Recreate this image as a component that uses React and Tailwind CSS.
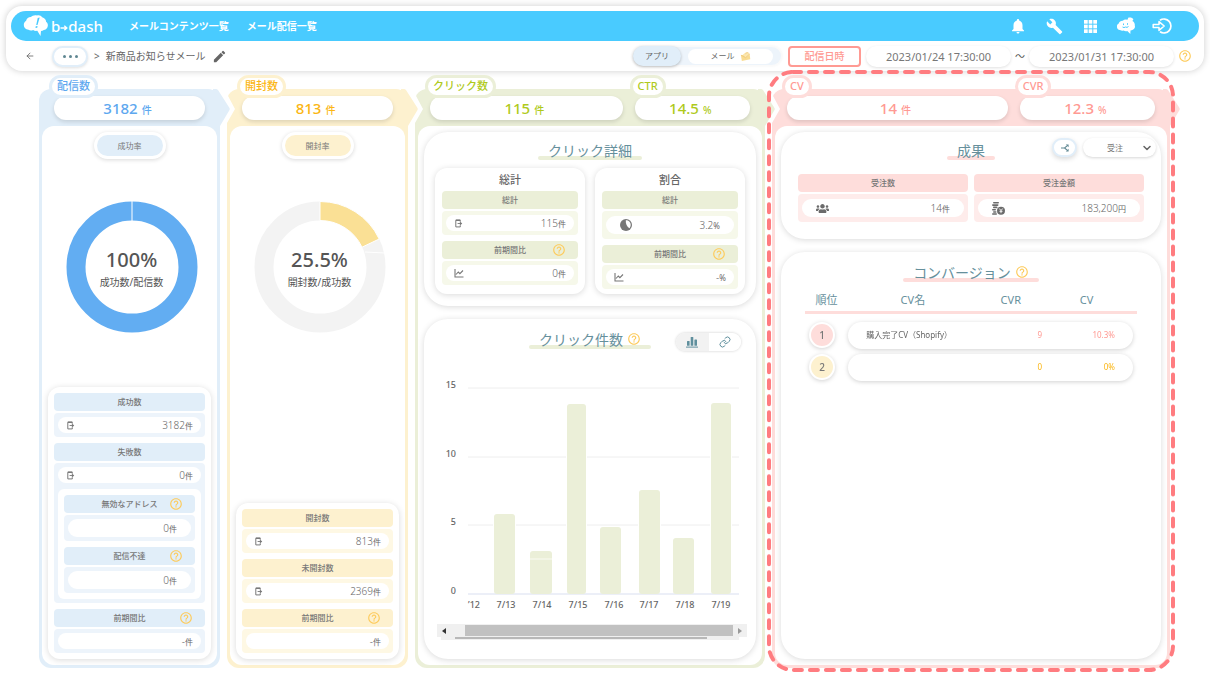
import React from "react";
import { MdHelpOutline, MdNotifications, MdBuild, MdEdit } from "react-icons/md";
import { FaUsers } from "react-icons/fa";
import { ArrowLeft, ChevronDown, Link as LinkIcon } from "lucide-react";

const THEMES = {
  blue: {
    solid: "bg-[#e1eef9]",
    pale: "bg-[#edf4fb]",
    border: "border-[#e1eef9]",
    text: "text-[#5ea8ef]",
    fill: "fill-[#e1eef9]",
  },
  yellow: {
    solid: "bg-[#fdf1cf]",
    pale: "bg-[#fef8e4]",
    border: "border-[#fdf1cf]",
    text: "text-[#fbb614]",
    fill: "fill-[#fdf1cf]",
  },
  green: {
    solid: "bg-[#ebefd8]",
    pale: "bg-[#f6f8ea]",
    border: "border-[#ebefd8]",
    text: "text-[#afca1c]",
    fill: "fill-[#ebefd8]",
  },
  pink: {
    solid: "bg-[#fedddb]",
    pale: "bg-[#feeceb]",
    border: "border-[#fedddb]",
    text: "text-[#ff9a93]",
    fill: "fill-[#fedddb]",
  },
};

function LogoMark() {
  return (
    <svg viewBox="0 0 26 24" className="h-6 w-[26px]" aria-hidden="true">
      <path
        fill="#fff"
        d="M5.5 15.8C2.5 15.5.8 13.4.8 11c0-2.200 1-3.400 2.200-4C3.600 4.400 5.800 3 8 3.100 9.300 1.400 12 .7 14 1.500c1.800-.7 4.200 0 5.200 1.700 2.300.5 3.900 2.500 3.900 4.600 1.600 1 2.300 3.300 1.400 5.400-.7 1.700-2.200 2.500-3.700 2.700-.8.7-1.800 1.100-2.800 1.200L17.500 22l-3.200-5.200c-1.600.4-3.100 0-4.200-.9-1.500.8-3.300.7-4.600-.1z"
      />
      <path fill="#49cbff" d="M14.700 4l2-.6-2.200 7.600-1.300.1zM12.700 12.300l1.800-.2-.2 1.600-1.800.2z" />
    </svg>
  );
}

function GridIcon() {
  return (
    <svg viewBox="0 0 14 14" className="size-[13px]" fill="#fff" aria-hidden="true">
      {[0, 5, 10].map((y) => [0, 5, 10].map((x) => <rect key={`${x}-${y}`} x={x} y={y} width="4" height="4" />))}
    </svg>
  );
}

function MascotIcon() {
  return (
    <svg viewBox="0 0 20 18" className="h-[18px] w-5" aria-hidden="true">
      <path
        fill="#fff"
        d="M4 13C2 13 .9 11.500 1 10c-.3-1.600.6-2.900 1.800-3.400C3.300 4.600 5 3.600 6.800 3.800 8 2.500 10 2.300 11.200 3L12.500.6c2.300-.4 4 .3 4.900 1.700l-1 1.800c1.800 1 2.700 2.700 2.400 4.400.6 1.800-.2 3.600-2 4.200-.7.6-1.500.8-2.300.8L14.300 17l-3-3c-1.300.4-2.700.2-3.700-.5-1.100.4-2.600.3-3.600-.5z"
      />
      <path fill="none" stroke="#49cbff" strokeWidth="1" d="M7.500 6.500v1.600M11.500 6.200v1.600M6.500 10q1.500 1.200 3 0q1.500 1 3-.5" />
    </svg>
  );
}

function ExitIcon() {
  return (
    <svg viewBox="0 0 20 18" className="h-[18px] w-5" fill="none" stroke="#fff" strokeWidth="1.7" aria-hidden="true">
      <path d="M8 3.200A7 7 0 1 1 8 14.800" />
      <path strokeWidth="1.500" strokeLinejoin="round" d="M1.200 7.400H7V4.600L12.200 9 7 13.400V10.600H1.200z" />
    </svg>
  );
}

function PhoneOutIcon() {
  return (
    <svg viewBox="0 0 10 10" className="size-[9px]" fill="none" stroke="#777" aria-hidden="true">
      <path strokeWidth="1.100" d="M7 3V1.500H2v7.300h5V7" />
      <path strokeWidth="1.600" d="M2 1.300h5" />
      <path strokeWidth="1" d="M4 5h3" />
      <path fill="#777" stroke="none" d="M6.500 2.800l2.700 2.200-2.700 2.200z" />
    </svg>
  );
}

function TrendIcon() {
  return (
    <svg viewBox="0 0 10 10" className="size-[10px]" fill="none" stroke="#777" strokeWidth="1.100" aria-hidden="true">
      <path d="M1 1v8h8.500M2 6.500L4.300 4l1.600 1.600L9 2.500" />
    </svg>
  );
}

function RatioIcon() {
  return (
    <svg viewBox="0 0 12 12" className="size-3" aria-hidden="true">
      <circle cx="6" cy="6" r="6" fill="#777" />
      <path fill="#fff" d="M5.800 1.300C8.500 1.200 10.700 3.200 10.700 6c0 1.300-.6 2.500-1.400 3.300Q5.500 6.500 5.800 1.300z" />
    </svg>
  );
}

function CoinsIcon() {
  return (
    <svg viewBox="0 0 13 13" className="size-[13px]" aria-hidden="true">
      <g fill="#6b6b6b">
        <rect x="1" y="0" width="6" height="1.600" rx=".8" />
        <rect x="0" y="2.300" width="6.500" height="1.600" rx=".8" />
        <rect x="1" y="4.600" width="4.500" height="1.600" rx=".8" />
        <rect x="0" y="6.900" width="4" height="1.600" rx=".8" />
        <rect x="1" y="9.200" width="3.500" height="1.600" rx=".8" />
        <rect x="0" y="11.200" width="5" height="1.500" rx=".7" />
        <circle cx="9" cy="8.700" r="4" />
      </g>
      <path stroke="#fff" strokeWidth=".9" fill="none" d="M7.300 6.500L9 8.600l1.700-2.100M9 8.600v2.600M7.500 9.300h3" />
    </svg>
  );
}

function BranchIcon() {
  return (
    <svg viewBox="0 0 10 10" className="size-2" fill="none" stroke="#5f8792" strokeWidth="1.400" aria-hidden="true">
      <path d="M0 5h4.500L8 2M4.500 5L8 8" />
      <path fill="#5f8792" stroke="none" d="M6 .5H9.500V4zM6 9.500h3.500V6z" />
    </svg>
  );
}

function BarsIcon() {
  return (
    <svg viewBox="0 0 12 12" className="size-3" fill="#5f8f9d" aria-hidden="true">
      <rect x="1" y="5" width="2.600" height="4.800" rx=".6" />
      <rect x="4.700" y="1" width="2.600" height="8.800" rx=".6" />
      <rect x="8.400" y="3.500" width="2.600" height="6.300" rx=".6" />
      <rect x="0" y="10.600" width="12" height="1" />
    </svg>
  );
}

function MailArtIcon() {
  return (
    <svg viewBox="0 0 12 12" className="size-[11px]" aria-hidden="true">
      <path fill="#f9dc92" d="M1 4.500l9.500-1.200.7 5.700L2 10.800z" />
      <path fill="#fbe7b0" d="M3 4l3-2.500 4 .5.200 2.500L6.300 7z" />
      <path fill="none" stroke="#efc577" strokeWidth=".8" d="M1 4.500l5 2.800 4.500-4M6 3.500q1-3 3-1.500" />
    </svg>
  );
}

function Help({ className = "" }) {
  return (
    <button type="button" aria-label="ヘルプ" className={`text-[#fdcb5c] ${className}`}>
      <MdHelpOutline className="size-[14px]" />
    </button>
  );
}

function HeaderArrow({ theme }) {
  return (
    <svg viewBox="0 0 22 40" className="absolute top-0 -right-[15px] z-10 h-10 w-[22px]" aria-hidden="true">
      <path fill="#fff" d="M4 0H17L14 5l8 15-8 14v6H7z" />
      <path className={THEMES[theme].fill} d="M0 0h3q1 0 2 1l11.500 18q.5 1 0 2L7 37v3H4L0 37z" />
    </svg>
  );
}

function Kpi({ theme, label, value, unit, className = "" }) {
  const t = THEMES[theme];
  return (
    <div className={`relative h-6 ${className}`}>
      <p
        className={`flex h-full items-baseline justify-center gap-1 rounded-full bg-white pr-1 text-[15px] leading-6 font-medium shadow-[0_2px_4px_rgba(0,0,0,0.13)] ${t.text}`}
      >
        {value}
        <span className="text-[10px]">{unit}</span>
      </p>
      <h2
        className={`absolute -top-[21px] -left-[5px] flex h-[23px] items-center rounded-full border-3 bg-white px-[5px] text-[11px] font-medium whitespace-nowrap ${t.border} ${t.text}`}
      >
        {label}
      </h2>
    </div>
  );
}

function Stage({ theme, kpis, arrow = true, children }) {
  const t = THEMES[theme];
  return (
    <section className={`relative flex min-w-0 flex-col rounded-xl px-[3px] pb-[3px] ${t.solid}`}>
      <div className="flex gap-3 px-3 pt-[7px] pb-[6px]">{kpis}</div>
      {arrow && <HeaderArrow theme={theme} />}
      <div className="flex flex-1 flex-col rounded-xl bg-white p-[6px]">{children}</div>
    </section>
  );
}

function Metric({ theme, label, help, icon, value, unit, tall, wide, inset, children }) {
  const t = THEMES[theme];
  return (
    <div className="flex flex-col gap-[2px]">
      <div className={`relative flex h-[18px] items-center justify-center rounded text-[8px] font-medium text-[#777] ${t.solid}`}>
        {label}
        {help && <Help className="absolute right-3" />}
      </div>
      <div className={`flex flex-col gap-[6px] rounded p-1 ${t.pale}`}>
        <div
          className={`flex items-center justify-between rounded-full bg-white ${tall ? "h-[18px]" : "h-4"} ${
            inset ? "px-[14px]" : "px-2"
          } ${wide ? "my-px" : ""}`}
        >
          <span className="flex">{icon}</span>
          <span className="text-[10px] leading-4 font-light text-[#666]">
            {value}
            <span className="text-[8px] font-normal">{unit}</span>
          </span>
        </div>
        {children}
      </div>
    </div>
  );
}

const cardShadow = "bg-white shadow-[0_1px_6px_rgba(0,0,0,0.15)]";

function MetricCard({ children }) {
  return <div className={`mt-auto flex flex-col gap-[6px] rounded-xl p-[6px] ${cardShadow}`}>{children}</div>;
}

function RatePill({ theme, children }) {
  return (
    <h3
      className={`mx-auto flex h-[27px] w-[72px] items-center justify-center rounded-full border-3 border-white text-[8px] text-[#777] shadow-[0_1px_4px_rgba(0,0,0,0.15)] ${THEMES[theme].solid}`}
    >
      {children}
    </h3>
  );
}

function Donut({ value, label, children }) {
  return (
    <div className="mt-[42px] flex justify-center pl-1">
      <div className="relative size-[132px]">
        <svg viewBox="-66 -66 132 132" className="size-full" aria-hidden="true">
          {children}
        </svg>
        <div className="absolute inset-0 flex flex-col items-center justify-center pt-[6px] text-[#555]">
          <strong className="text-xl leading-6 font-medium">{value}</strong>
          <span className="text-[10px] leading-5">{label}</span>
        </div>
      </div>
    </div>
  );
}

function Title({ theme, help, children }) {
  return (
    <h3 className="relative isolate flex h-6 items-center px-[10px] text-[14px] text-[#66909c]">
      <span className={`absolute inset-x-0 bottom-[2px] -z-10 h-1 rounded-full ${THEMES[theme].solid}`} />
      {children}
      {help && <Help className="ml-1" />}
    </h3>
  );
}

const TICKS = [
  { label: "15", y: 16 },
  { label: "10", y: 85 },
  { label: "5", y: 153 },
  { label: "0", y: 222 },
];
const BARS = [
  { x: 59, w: 21, top: 142 },
  { x: 95, w: 22, top: 179, split: 187 },
  { x: 132, w: 19, top: 32 },
  { x: 165, w: 21, top: 155 },
  { x: 204, w: 21, top: 118 },
  { x: 238, w: 21, top: 166 },
  { x: 276, w: 20, top: 31 },
];
const DAYS = [
  ["’12", 39],
  ["7/13", 71],
  ["7/14", 107],
  ["7/15", 143],
  ["7/16", 179],
  ["7/17", 214],
  ["7/18", 250],
  ["7/19", 286],
];

function ClickChart() {
  return (
    <svg viewBox="0 0 310 244" className="w-full font-medium" role="img" aria-label="クリック件数">
      {TICKS.map((t) => (
        <g key={t.label}>
          <line x1="33" x2="304" y1={t.y} y2={t.y} stroke={t.label === "0" ? "#d9dff0" : "#eeeeee"} />
          <text x="21" y={t.y} textAnchor="end" fontSize="9" fill="#666">
            {t.label}
          </text>
        </g>
      ))}
      {BARS.map((b) => (
        <g key={b.x}>
          <rect x={b.x - 1} y={b.top - 1} width={b.w + 2} height={222 - b.top} fill="#fff" />
          <rect x={b.x} y={b.top} width={b.w} height={222 - b.top} rx="3" fill="#ebefd8" />
          {b.split && <line x1={b.x} x2={b.x + b.w} y1={b.split} y2={b.split} stroke="#fafbf3" />}
        </g>
      ))}
      {DAYS.map(([d, x]) => (
        <text key={d} x={x} y="236" textAnchor="middle" fontSize="9" fill="#666">
          {d}
        </text>
      ))}
    </svg>
  );
}

function ChartScrollbar() {
  return (
    <div className="mt-2 -mr-[2px] ml-[2px]" aria-hidden="true">
      <div className="flex h-[13px] items-center bg-[#f0f0f0]">
        <svg viewBox="0 0 14 12" className="h-3 w-[14px]">
          <path fill="#333" d="M9 3v6L5 6z" />
        </svg>
        <div className="ml-[14px] h-[11px] flex-1 bg-[#c1c1c1]" />
        <svg viewBox="0 0 14 12" className="h-3 w-[14px]">
          <path fill="#999" d="M5 3v6l4-3z" />
        </svg>
      </div>
      <div className="mr-2 ml-1 flex h-[3px] bg-[#f0f0f0] pr-8 pl-[14px]">
        <div className="h-[2px] flex-1 bg-[#b8b8b8]" />
      </div>
    </div>
  );
}

function DateField({ label, value }) {
  return (
    <input
      type="text"
      aria-label={label}
      defaultValue={value}
      className="h-[21px] w-[145px] rounded-full bg-white text-center text-[11px] text-[#777] shadow-[0_1px_3px_rgba(0,0,0,0.12)] outline-none"
    />
  );
}

function Header() {
  return (
    <header className="mx-[6px] mt-[6px] rounded-2xl bg-white p-[5px] pb-0 shadow-[0_0_7px_rgba(0,0,0,0.2)]">
      <div className="flex h-[30px] items-center rounded-full bg-[#49cbff] pr-[27px] pl-3 text-white">
        <a href="#home" className="flex items-center gap-[2px]" aria-label="b-dash">
          <LogoMark />
          <span className="flex items-center text-[15px] leading-5 font-medium">
            b
            <svg viewBox="0 0 8 8" className="mt-1 size-2" fill="none" stroke="#fff" strokeWidth="1.400" aria-hidden="true">
              <path d="M.5 4h6M4.300 1.800L6.800 4 4.300 6.200" />
            </svg>
            dash
          </span>
        </a>
        <nav className="ml-[26px] flex gap-[18px] text-[10px] font-bold">
          <a href="#contents">メールコンテンツ一覧</a>
          <a href="#deliveries">メール配信一覧</a>
        </nav>
        <div className="ml-auto flex items-center gap-4">
          <button type="button" aria-label="通知" className="flex size-5 items-center justify-center">
            <MdNotifications className="size-[18px]" />
          </button>
          <button type="button" aria-label="設定" className="flex size-5 items-center justify-center">
            <MdBuild className="size-[17px]" />
          </button>
          <button type="button" aria-label="アプリ一覧" className="flex size-5 items-center justify-center">
            <GridIcon />
          </button>
          <button type="button" aria-label="アカウント" className="flex size-5 items-center justify-center">
            <MascotIcon />
          </button>
          <button type="button" aria-label="ログアウト" className="flex size-5 items-center justify-center">
            <ExitIcon />
          </button>
        </div>
      </div>
      <div className="flex h-[30px] items-center pr-[7px] pl-[14px] text-[10px] text-[#666]">
        <button type="button" aria-label="戻る">
          <ArrowLeft className="size-[10px]" />
        </button>
        <button
          type="button"
          aria-label="階層を表示"
          className="ml-[17px] flex h-[21px] w-9 items-center justify-center gap-[3px] rounded-full border-2 border-[#e1eef9] bg-white shadow-[0_1px_3px_rgba(0,0,0,0.12)]"
        >
          <span className="size-[3px] rounded-full bg-[#5f8792]" />
          <span className="size-[3px] rounded-full bg-[#5f8792]" />
          <span className="size-[3px] rounded-full bg-[#5f8792]" />
        </button>
        <span className="ml-[6px]">&gt;</span>
        <h1 className="ml-[6px]">新商品お知らせメール</h1>
        <button type="button" aria-label="編集" className="ml-[6px]">
          <MdEdit className="size-[15px]" />
        </button>
        <div className="ml-auto flex items-center">
          <div className="flex h-[18px] w-[148px] items-center gap-[7px] rounded-full bg-[#edf4fb] pr-2 text-[8px] shadow-[0_0_2px_2px_#fafafa]">
            <button
              type="button"
              aria-pressed="true"
              className="h-5 w-12 rounded-full bg-[#e1eef9] shadow-[0_1px_3px_rgba(0,0,0,0.25)]"
            >
              アプリ
            </button>
            <button
              type="button"
              aria-pressed="false"
              className="flex h-[15px] flex-1 items-center justify-center gap-[5px] rounded-full bg-white"
            >
              メール
              <MailArtIcon />
            </button>
          </div>
          <button
            type="button"
            className="ml-[7px] h-[21px] w-[73px] rounded border-2 border-[#ff9a93] bg-white font-medium text-[#ff9a93]"
          >
            配信日時
          </button>
          <div className="ml-[5px] flex items-center gap-1">
            <DateField label="配信日時（開始）" value="2023/01/24 17:30:00" />
            <span className="text-[#555]">〜</span>
            <DateField label="配信日時（終了）" value="2023/01/31 17:30:00" />
            <Help />
          </div>
        </div>
      </div>
    </header>
  );
}

function DeliveryStage() {
  return (
    <Stage theme="blue" kpis={<Kpi theme="blue" label="配信数" value="3182" unit="件" className="flex-1" />}>
      <RatePill theme="blue">成功率</RatePill>
      <Donut value="100%" label="成功数/配信数">
        <circle r="56" fill="none" stroke="#62adf2" strokeWidth="19" />
        <line x1="0" x2="0" y1="-66" y2="-46" stroke="#fff" />
      </Donut>
      <MetricCard>
        <Metric theme="blue" label="成功数" icon={<PhoneOutIcon />} value="3182" unit="件" />
        <Metric theme="blue" label="失敗数" icon={<PhoneOutIcon />} value="0" unit="件">
          <div className="flex flex-col gap-[6px] rounded-md bg-white p-[6px]">
            <Metric theme="blue" label="無効なアドレス" help tall inset value="0" unit="件" />
            <Metric theme="blue" label="配信不達" help tall inset value="0" unit="件" />
          </div>
        </Metric>
        <Metric theme="blue" label="前期間比" help value="-" unit="件" />
      </MetricCard>
    </Stage>
  );
}

function OpenStage() {
  return (
    <Stage theme="yellow" kpis={<Kpi theme="yellow" label="開封数" value="813" unit="件" className="flex-1" />}>
      <RatePill theme="yellow">開封率</RatePill>
      <Donut value="25.5%" label="開封数/成功数">
        <circle r="56" fill="none" stroke="#f3f3f3" strokeWidth="19" />
        <path fill="#fae095" stroke="#fff" d="M0-65.500A65.500 65.500 0 0 1 59.200-28L42-19.800A46.500 46.500 0 0 0 0-46.500z" />
        <line x1="45" x2="65" y1="-15" y2="-14" stroke="#fff" />
      </Donut>
      <MetricCard>
        <Metric theme="yellow" label="開封数" icon={<PhoneOutIcon />} value="813" unit="件" />
        <Metric theme="yellow" label="未開封数" icon={<PhoneOutIcon />} value="2369" unit="件" />
        <Metric theme="yellow" label="前期間比" help value="-" unit="件" />
      </MetricCard>
    </Stage>
  );
}

function ClickStage() {
  return (
    <Stage
      theme="green"
      kpis={
        <>
          <Kpi theme="green" label="クリック数" value="115" unit="件" className="flex-[5]" />
          <Kpi theme="green" label="CTR" value="14.5" unit="%" className="flex-[3]" />
        </>
      }
    >
      <div className={`flex flex-col rounded-3xl px-[11px] pt-[6px] pb-3 ${cardShadow}`}>
        <div className="flex h-[30px] justify-center">
          <Title theme="green">クリック詳細</Title>
        </div>
        <div className="grid grid-cols-2 gap-[10px]">
          <div className={`flex flex-col gap-[6px] rounded-xl px-[7px] ${cardShadow}`}>
            <h4 className="-mb-[6px] text-center text-[11px] leading-[23px] font-medium text-[#666]">総計</h4>
            <Metric theme="green" label="総計" icon={<PhoneOutIcon />} value="115" unit="件" />
            <Metric theme="green" label="前期間比" help icon={<TrendIcon />} value="0" unit="件" />
          </div>
          <div className={`flex flex-col gap-[6px] rounded-xl px-[7px] pb-[5px] ${cardShadow}`}>
            <h4 className="-mb-[6px] text-center text-[11px] leading-[23px] font-medium text-[#666]">割合</h4>
            <Metric theme="green" label="総計" tall wide inset icon={<RatioIcon />} value="3.2" unit="%" />
            <Metric theme="green" label="前期間比" help icon={<TrendIcon />} value="-" unit="%" />
          </div>
        </div>
      </div>
      <div className={`mt-[13px] flex flex-1 flex-col rounded-3xl px-[11px] pt-2 ${cardShadow}`}>
        <div className="grid grid-cols-[1fr_auto_1fr]">
          <div className="col-start-2">
            <Title theme="green" help>
              クリック件数
            </Title>
          </div>
          <div className="mt-[6px] mr-1 flex h-[18px] w-[65px] justify-self-end overflow-hidden rounded-full shadow-[0_0_3px_rgba(0,0,0,0.2)]">
            <button
              type="button"
              aria-label="グラフ表示"
              aria-pressed="true"
              className="flex flex-1 items-center justify-center bg-[#f2f2f2]"
            >
              <BarsIcon />
            </button>
            <button
              type="button"
              aria-label="リンク表示"
              aria-pressed="false"
              className="flex flex-1 items-center justify-center bg-white text-[#5f8f9d]"
            >
              <LinkIcon className="size-3" />
            </button>
          </div>
        </div>
        <div className="mt-[21px]">
          <ClickChart />
          <ChartScrollbar />
        </div>
      </div>
    </Stage>
  );
}

const ROWS = [
  {
    rank: 1,
    name: "購入完了CV（Shopify）",
    cvr: "9",
    cv: "10.3%",
    badge: "bg-[#fedddb]",
    text: "text-[#ff9a93]",
  },
  { rank: 2, name: "", cvr: "0", cv: "0%", badge: "bg-[#fdf1cf]", text: "text-[#fbb614]" },
];

function ConversionTable() {
  return (
    <table className="mt-[6px] w-full table-fixed border-separate border-spacing-0">
      <colgroup>
        <col className="w-[13%]" />
        <col className="w-[39%]" />
        <col className="w-[20%]" />
        <col className="w-[28%]" />
      </colgroup>
      <thead>
        <tr className="text-[11px] text-[#66909c]">
          {["順位", "CV名", "CVR", "CV"].map((h) => (
            <th key={h} scope="col" className="h-6 border-b-3 border-[#fedddb] px-0 font-normal last:pr-2">
              {h}
            </th>
          ))}
        </tr>
      </thead>
      <tbody>
        <tr aria-hidden="true">
          <td colSpan={4} className="h-[5px]" />
        </tr>
        {ROWS.map((r) => (
          <tr key={r.rank} className="text-[8px] drop-shadow-[0_1px_2px_rgba(0,0,0,0.18)]">
            <th scope="row" className="h-8 p-0 pl-1 font-medium">
              <span
                className={`flex size-[26px] items-center justify-center rounded-full border-2 border-white text-[10px] text-[#777] ${r.badge}`}
              >
                {r.rank}
              </span>
            </th>
            <td className="p-0">
              <div className="flex h-[27px] items-center rounded-l-full bg-white pl-[18px] text-[#666]">{r.name}</div>
            </td>
            <td className="p-0">
              <div className={`flex h-[27px] items-center justify-end bg-white pr-[2px] ${r.text}`}>{r.cvr}</div>
            </td>
            <td className="p-0 pr-1">
              <div className={`flex h-[27px] items-center justify-end rounded-r-full bg-white pr-[18px] ${r.text}`}>
                {r.cv}
              </div>
            </td>
          </tr>
        ))}
      </tbody>
    </table>
  );
}

function ConversionStage() {
  return (
    <div className="relative flex flex-col">
      <Stage
        theme="pink"
        kpis={
          <>
            <Kpi theme="pink" label="CV" value="14" unit="件" className="flex-[222]" />
            <Kpi theme="pink" label="CVR" value="12.3" unit="%" className="flex-[136]" />
          </>
        }
      >
        <div className={`rounded-3xl px-[17px] pt-[6px] pb-[17px] ${cardShadow}`}>
          <div className="grid grid-cols-[1fr_auto_1fr] items-start">
            <div className="col-start-2">
              <Title theme="pink">成果</Title>
            </div>
            <div className="-mr-3 flex gap-[6px] justify-self-end">
              <button
                type="button"
                aria-label="分岐"
                className="flex h-[19px] w-[25px] items-center justify-center rounded-full border-2 border-[#e1eef9] bg-white shadow-[0_2px_5px_rgba(0,0,0,0.15)]"
              >
                <BranchIcon />
              </button>
              <div className="relative flex h-[19px]">
                <select
                  aria-label="成果の種類"
                  className="h-full w-[73px] appearance-none rounded-full bg-white pl-6 text-[8px] text-[#777] shadow-[0_1px_3px_rgba(0,0,0,0.16)]"
                >
                  <option>受注</option>
                </select>
                <ChevronDown className="pointer-events-none absolute top-1 right-[3px] size-3 text-[#666]" strokeWidth={3} />
              </div>
            </div>
          </div>
          <div className="mt-3 grid grid-cols-2 gap-[6px]">
            <Metric theme="pink" label="受注数" tall wide inset icon={<FaUsers className="size-[13px] text-[#6b6b6b]" />} value="14" unit="件" />
            <Metric theme="pink" label="受注金額" tall wide inset icon={<CoinsIcon />} value="183,200" unit="円" />
          </div>
        </div>
        <div className={`mt-[13px] flex-1 rounded-3xl px-6 pt-2 ${cardShadow}`}>
          <div className="flex justify-center">
            <Title theme="pink" help>
              コンバージョン
            </Title>
          </div>
          <ConversionTable />
        </div>
      </Stage>
      <HighlightFrame />
    </div>
  );
}

function HighlightFrame() {
  return (
    <div className="pointer-events-none absolute -inset-x-[5px] -top-[19px] -bottom-1 z-20">
      <svg className="size-full overflow-visible" aria-hidden="true">
        <rect
          x="2"
          y="2"
          rx="24"
          className="h-[calc(100%-4px)] w-[calc(100%-4px)] fill-none stroke-[#ff7c80]"
          strokeWidth="4"
          strokeLinecap="round"
          strokeDasharray="8 8"
        />
      </svg>
    </div>
  );
}

export default function App() {
  return (
    <div className="flex min-h-screen flex-col bg-white font-['Noto_Sans','Noto_Sans_CJK_JP',sans-serif]">
      <Header />
      <main className="grid flex-1 grid-cols-[181fr_181fr_350fr_398fr] gap-[7px] pt-[18px] pr-10 pb-3 pl-[39px] [&>*:last-child>section]:flex-1">
        <DeliveryStage />
        <OpenStage />
        <ClickStage />
        <ConversionStage />
      </main>
    </div>
  );
}
